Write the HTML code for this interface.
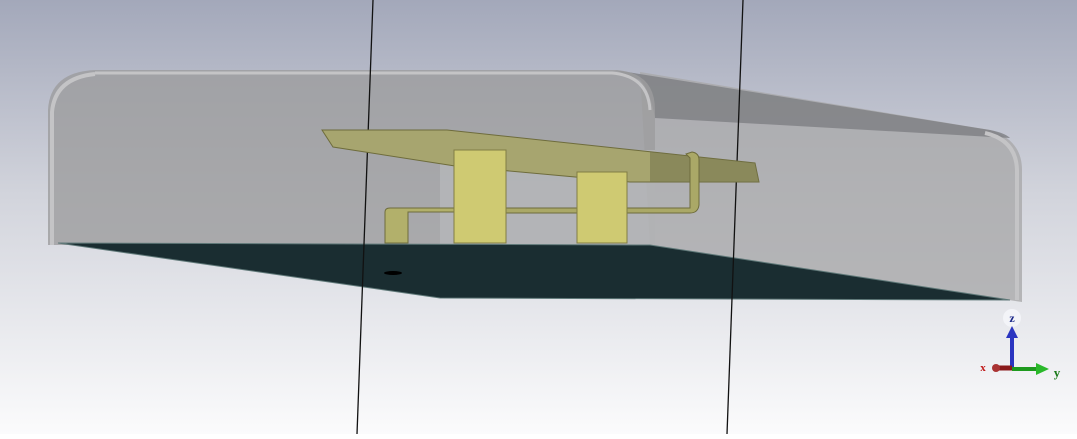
<!DOCTYPE html><html><head><style>html,body{margin:0;padding:0}body{width:1077px;height:434px;overflow:hidden}</style></head><body>
<svg width="1077" height="434" viewBox="0 0 1077 434" xmlns="http://www.w3.org/2000/svg">
<defs><linearGradient id="bg" x1="0" y1="0" x2="0" y2="1"><stop offset="0" stop-color="#a3a8ba"/><stop offset="0.45" stop-color="#d2d4dc"/><stop offset="1" stop-color="#fbfbfc"/></linearGradient></defs>
<rect width="1077" height="434" fill="url(#bg)"/>
<!-- right side of box -->
<path d="M640,72 L990,130 Q1022,140 1022,170 L1022,302 L650,246 Z" fill="#a9a9aa" fill-opacity="0.8"/>
<path d="M615,70 L990,130 Q1005,133 1010,138 L655,118 Q650,90 640,80 Z" fill="#7d7e82" fill-opacity="0.8"/>
<!-- front face -->
<path d="M95,70 L615,70 Q655,72 655,110 L655,245 L48,245 L48,110 Q50,72 95,70 Z" fill="#9c9c9e" fill-opacity="0.8"/>
<path d="M95,73 L612,73 Q648,76 650,110" fill="none" stroke="#c4c4c6" stroke-width="3"/>
<path d="M52,245 L52,112 Q55,78 95,74" fill="none" stroke="#c4c4c6" stroke-width="4"/>
<path d="M985,133 Q1016,140 1017,170 L1017,300" fill="none" stroke="#c4c4c6" stroke-width="4"/>
<rect x="440" y="150" width="215" height="95" fill="#b8b9bc" fill-opacity="0.7"/>
<!-- ground -->
<path d="M58,243 L650,245 L1010,300 L440,298 Z" fill="#1a2d31" stroke="#5f7878" stroke-width="1"/>
<ellipse cx="393" cy="273" rx="9" ry="2" fill="#000"/>
<line x1="373" y1="0" x2="357" y2="434" stroke="#111" stroke-width="1.3"/>
<line x1="743" y1="0" x2="727" y2="434" stroke="#111" stroke-width="1.3"/>
<!-- patch -->
<path d="M322,130 L447,130 L755,163 L759,182 L630,182 L455,166 L333,147 Z" fill="#a7a56f" stroke="#6e6c3c" stroke-width="1"/>
<path d="M650,152 L755,163 L759,182 L650,182 Z" fill="#77764e" fill-opacity="0.6"/>
<!-- feed line -->
<path d="M385,243 L385,212 Q385,208 390,208 L455,208 L455,212 L408,212 L408,243 Z" fill="#b2b06b" stroke="#6e6c3c" stroke-width="1"/>
<path d="M506,208 L690,208 L690,158 L686,154 L692,152 Q699,153 699,160 L699,205 Q698,213 690,213 L506,213 Z" fill="#aaa867" stroke="#6e6c3c" stroke-width="1"/>
<!-- posts -->
<rect x="454" y="150" width="52" height="93" fill="#cfca72" stroke="#807d44" stroke-width="1"/>
<rect x="577" y="172" width="50" height="71" fill="#cfca72" stroke="#807d44" stroke-width="1"/>
<!-- axes -->
<circle cx="1012" cy="318" r="9" fill="#f3f4f8"/>
<text x="1012" y="322" font-family="Liberation Serif,serif" font-weight="bold" font-size="12" fill="#1d2a8a" text-anchor="middle">z</text>
<line x1="1012" y1="368" x2="1012" y2="336" stroke="#2b35c0" stroke-width="4"/>
<path d="M1006,338 L1012,326 L1018,338 Z" fill="#2b35c0"/>
<line x1="1012" y1="369" x2="1038" y2="369" stroke="#1e9a1e" stroke-width="4"/>
<path d="M1036,363 L1049,369 L1036,375 Z" fill="#2ab82a"/>
<text x="1057" y="377" font-family="Liberation Serif,serif" font-weight="bold" font-size="13" fill="#1a7a1a" text-anchor="middle">y</text>
<line x1="996" y1="368" x2="1012" y2="368" stroke="#8a1a1a" stroke-width="5"/>
<circle cx="996" cy="368" r="4" fill="#a33"/>
<text x="983" y="371" font-family="Liberation Serif,serif" font-weight="bold" font-size="11" fill="#c01a1a" text-anchor="middle">x</text>
</svg>
</body></html>
